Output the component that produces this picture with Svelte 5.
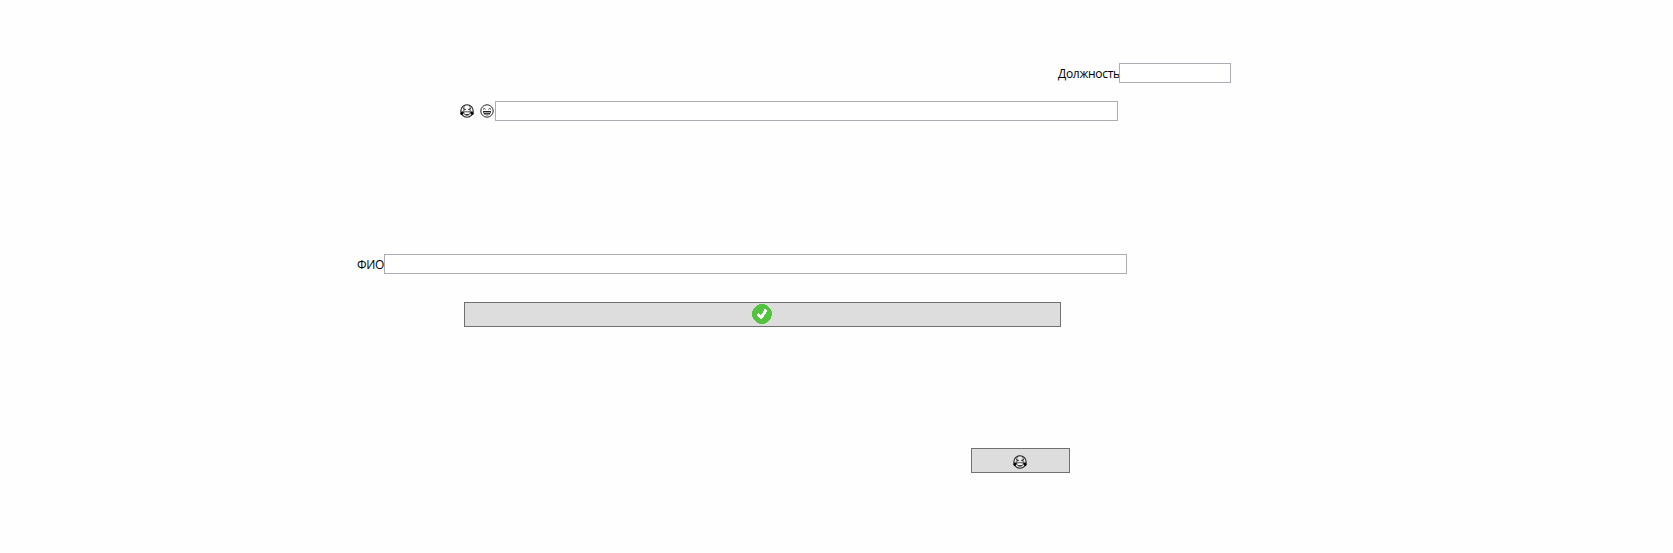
<script>
  let position = $state('');
  let mood = $state('');
  let fullName = $state('');
</script>

{#snippet joy()}
  <svg class="face" viewBox="0 0 14 14" role="img" aria-label="😂">
    <circle cx="7" cy="7" r="6.2" fill="#fff" fill-opacity=".3" stroke="#1c1c1c" stroke-width="1.1" />
    <path d="M3.2 3.5 5 2.6M10.8 3.5 9 2.6" fill="none" stroke="#444" stroke-width=".8" />
    <path d="M3 4.5 5.6 5.4 3.2 6.3M11 4.5 8.4 5.4 10.8 6.3" fill="none" stroke="#222" stroke-width="1" />
    <path d="M3.6 7.8H10.4C10.3 10 9 11.2 7 11.2S3.7 10 3.6 7.8Z" fill="#fff" stroke="#222" stroke-width=".8" />
    <path d="M4.6 10.1H9.4C8.7 11 8 11.2 7 11.2S5.3 11 4.6 10.1Z" fill="#333" />
    <path d="M3.5 7.2C1.8 7.1.5 7.9.3 9.2.2 10.6 1.4 11.3 2.4 10.8 3.5 10.1 3.7 8.8 3.5 7.2ZM10.5 7.2C12.2 7.1 13.5 7.9 13.7 9.2 13.8 10.6 12.6 11.3 11.6 10.8 10.5 10.1 10.3 8.8 10.5 7.2Z" fill="#050505" />
  </svg>
{/snippet}

{#snippet grin()}
  <svg class="face" viewBox="0 0 14 14" role="img" aria-label="😄">
    <circle cx="7" cy="7" r="6.2" fill="#fff" stroke="#222" stroke-width="1" />
    <path d="M3 5.4Q4.3 3.4 5.6 5.4M8.4 5.4Q9.7 3.4 11 5.4" fill="none" stroke="#222" stroke-width=".9" />
    <path d="M3 7.1H11C11 9.9 9.5 11.4 7 11.4S3 9.9 3 7.1Z" fill="#222" />
    <path d="M3.8 8.5H10.2M4.6 10.3H9.4" stroke="#ccc" stroke-width=".8" />
  </svg>
{/snippet}

<main>
  <div class="field position">
    <label for="position"><span>Должность</span></label>
    <input id="position" bind:value={position} />
  </div>
  <div class="field mood">
    <label for="mood">{@render joy()}{@render grin()}</label>
    <input id="mood" bind:value={mood} />
  </div>
  <div class="field name">
    <label for="name"><span>ФИО</span></label>
    <input id="name" bind:value={fullName} />
  </div>
  <button class="confirm" type="button">
    <svg class="check" viewBox="0 0 20 20" shape-rendering="crispEdges" role="img" aria-label="✓">
      <circle cx="10" cy="10" r="10" fill="#52c440" />
      <path d="M4.6 10.6 6.5 8.8 9 11 13 4.6 15.6 6.2 10 15.2H8.4Z" fill="#fff" />
    </svg>
  </button>
  <button class="react" type="button">{@render joy()}</button>
</main>

<style>
  :global(body) {
    margin: 0;
    background: #fefefe;
  }
  main {
    display: flex;
    flex-direction: column;
    align-items: flex-start;
    box-sizing: border-box;
    width: 1673px;
    height: 553px;
    padding-top: 63px;
    overflow: hidden;
    font: 12px/20px "Open Sans", "Noto Sans", sans-serif;
    color: #000;
  }
  .field {
    display: flex;
    height: 20px;
  }
  label {
    display: flex;
    flex: none;
    align-items: center;
    white-space: nowrap;
  }
  label span {
    padding-top: 2px;
  }
  input {
    flex: none;
    box-sizing: border-box;
    height: 20px;
    margin: 0;
    padding: 0 3px;
    border: 1px solid #abadb3;
    border-radius: 0;
    background: #fff;
    font: inherit;
    outline: none;
  }
  .position {
    margin-left: 1058px;
  }
  .position label {
    width: 61px;
    letter-spacing: -0.28px;
  }
  .position input {
    width: 112px;
  }
  .mood {
    margin: 18px 0 0 460px;
  }
  .mood label {
    width: 35px;
    gap: 6px;
  }
  .mood input {
    width: 623px;
  }
  .name {
    margin: 133px 0 0 357px;
  }
  .name label {
    width: 27px;
    letter-spacing: -0.3px;
  }
  .name input {
    width: 743px;
  }
  button {
    display: flex;
    align-items: center;
    justify-content: center;
    box-sizing: border-box;
    height: 25px;
    padding: 0;
    border: 1px solid #707070;
    border-radius: 0;
    background: #ddd;
  }
  .confirm {
    width: 597px;
    margin: 28px 0 0 464px;
    padding: 0 1px 1px 0;
  }
  .react {
    width: 99px;
    margin: 121px 0 0 971px;
    padding: 3px 1px 0 0;
  }
  .face {
    flex: none;
    width: 14px;
    height: 14px;
  }
  .check {
    flex: none;
    width: 20px;
    height: 20px;
  }
</style>
